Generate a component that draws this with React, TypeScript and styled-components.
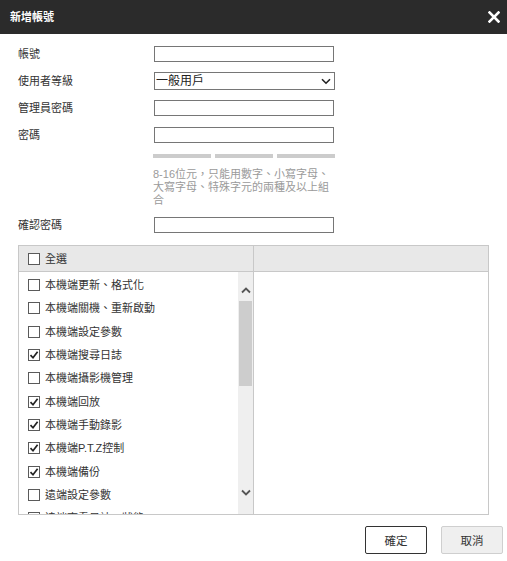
import React from "react";
import styled, { createGlobalStyle } from "styled-components";

const Global = createGlobalStyle`
  html, body { margin: 0; padding: 0; background: #fff; }
  body { font-family: "Liberation Sans", "Noto Sans CJK TC", sans-serif; font-size: 11px; color: #333; }
  * { box-sizing: border-box; }
`;

const Dialog = styled.div`
  width: 507px;
  height: 561px;
  display: flex;
  flex-direction: column;
  background: #fff;
  overflow: hidden;
`;

const Header = styled.div`
  height: 34px;
  flex: none;
  background: #2b2b2b;
  display: flex;
  align-items: center;
  justify-content: space-between;
  padding: 0 6px 0 10px;
`;

const Title = styled.div`
  color: #fff;
  font-weight: bold;
  font-size: 11px;
  line-height: 14px;
`;

const Close = styled.button`
  width: 14px;
  height: 14px;
  padding: 0;
  border: 0;
  background: none;
  display: flex;
  align-items: center;
  justify-content: center;
  cursor: pointer;
`;

const Form = styled.div`
  padding: 6px 0 0 18px;
  display: flex;
  flex-direction: column;
`;

const Row = styled.div<{ $h?: number }>`
  height: ${(p) => p.$h ?? 27}px;
  flex: none;
  display: flex;
  align-items: center;
`;

const Label = styled.div`
  width: 136px;
  flex: none;
  line-height: 14px;
`;

const Input = styled.input`
  width: 180px;
  height: 16px;
  border: 1px solid #767676;
  padding: 0 2px;
  font: inherit;
  outline: none;
`;

const SelectWrap = styled.div`
  position: relative;
  width: 181px;
  height: 18px;
`;

const Select = styled.select`
  appearance: none;
  width: 100%;
  height: 100%;
  border: 1px solid #767676;
  border-radius: 0;
  background: #fff;
  padding: 0 0 0 1px;
  font: inherit;
  font-size: 12px;
  color: #222;
  line-height: 16px;
  outline: none;
`;

const Chevron = styled.svg`
  position: absolute;
  right: 4px;
  top: 6px;
  pointer-events: none;
`;

const Strength = styled.div`
  display: flex;
  gap: 4px;
  margin: 6px 0 0 135px;
`;

const Bar = styled.div`
  width: 58px;
  height: 4px;
  background: #cccccc;
`;

const Hint = styled.div`
  width: 190px;
  margin: 10px 0 0 135px;
  color: #9a9a9a;
  font-size: 11px;
  line-height: 13px;
`;

const Table = styled.div`
  margin: 2px 0 0 18px;
  width: 471px;
  height: 270px;
  flex: none;
  border: 1px solid #c8c8c8;
  display: grid;
  grid-template-columns: 235px 1fr;
  grid-template-rows: 26px 1fr;
  overflow: hidden;
`;

const HeadCell = styled.div<{ $last?: boolean }>`
  background: #e8e8e8;
  border-bottom: 1px solid #c8c8c8;
  border-right: ${(p) => (p.$last ? "none" : "1px solid #c8c8c8")};
  display: flex;
  align-items: center;
  padding-left: 9px;
  gap: 5px;
`;

const ListPane = styled.div`
  border-right: 1px solid #c8c8c8;
  display: flex;
  overflow: hidden;
  min-height: 0;
`;

const List = styled.div`
  flex: 1;
  padding-top: 1.5px;
  display: flex;
  flex-direction: column;
`;

const Item = styled.div`
  height: 23.3px;
  flex: none;
  display: flex;
  align-items: center;
  padding-left: 9px;
  gap: 5px;
  white-space: nowrap;
`;

const ItemText = styled.span`
  line-height: 14px;
  color: #333;
`;

const Box = styled.span`
  width: 12px;
  height: 12px;
  flex: none;
  border: 1px solid #5a5a5a;
  background: #fff;
  display: flex;
  align-items: center;
  justify-content: center;
`;

const Scroll = styled.div`
  width: 15px;
  flex: none;
  background: #efefef;
  display: flex;
  flex-direction: column;
  align-items: center;
  padding-top: 15px;
`;

const Thumb = styled.div`
  width: 13px;
  height: 85px;
  background: #cdcdcd;
  margin-top: 7px;
`;

const DownArrow = styled.div`
  display: flex;
  margin-top: 103px;
`;

const Empty = styled.div``;

const Footer = styled.div`
  display: flex;
  justify-content: flex-end;
  gap: 14px;
  padding: 11px 4px 0 0;
`;

const Button = styled.button<{ $primary?: boolean }>`
  width: 62px;
  height: 28px;
  border-radius: 2px;
  border: 1px solid ${(p) => (p.$primary ? "#333" : "#cfcfcf")};
  background: ${(p) => (p.$primary ? "#fff" : "#efefef")};
  color: #333;
  font: inherit;
  font-size: 11.5px;
  padding: 0;
  cursor: pointer;
`;

const Check = ({ checked }: { checked?: boolean }) => (
  <Box>
    {checked && (
      <svg width="10" height="10" viewBox="0 0 10 10">
        <path d="M1.5 5.2 L4 7.8 L8.6 1.8" fill="none" stroke="#222" strokeWidth="1.7" />
      </svg>
    )}
  </Box>
);

const items: [string, boolean][] = [
  ["本機端更新、格式化", false],
  ["本機端關機、重新啟動", false],
  ["本機端設定參數", false],
  ["本機端搜尋日誌", true],
  ["本機端攝影機管理", false],
  ["本機端回放", true],
  ["本機端手動錄影", true],
  ["本機端P.T.Z控制", true],
  ["本機端備份", true],
  ["遠端設定參數", false],
  ["遠端查看日誌、狀態", false],
];

export default function App() {
  return (
    <>
      <Global />
      <Dialog>
        <Header>
          <Title>新增帳號</Title>
          <Close aria-label="close">
            <svg width="12" height="12" viewBox="0 0 12 12">
              <path d="M1.5 1.5 L10.5 10.5 M10.5 1.5 L1.5 10.5" stroke="#fff" strokeWidth="2.6" strokeLinecap="square" />
            </svg>
          </Close>
        </Header>
        <Form>
          <Row>
            <Label>帳號</Label>
            <Input />
          </Row>
          <Row>
            <Label>使用者等級</Label>
            <SelectWrap>
              <Select defaultValue="user">
                <option value="user">一般用戶</option>
                <option value="op">操作員</option>
              </Select>
              <Chevron width="10" height="7" viewBox="0 0 10 7">
                <path d="M1 1.2 L5 5.2 L9 1.2" fill="none" stroke="#222" strokeWidth="1.6" />
              </Chevron>
            </SelectWrap>
          </Row>
          <Row>
            <Label>管理員密碼</Label>
            <Input type="password" />
          </Row>
          <Row>
            <Label>密碼</Label>
            <Input type="password" />
          </Row>
          <Strength>
            <Bar />
            <Bar />
            <Bar />
          </Strength>
          <Hint>
            8-16位元，只能用數字、小寫字母、
            <br />
            大寫字母、特殊字元的兩種及以上組
            <br />合
          </Hint>
          <Row $h={36}>
            <Label>確認密碼</Label>
            <Input type="password" />
          </Row>
        </Form>
        <Table>
          <HeadCell>
            <Check />
            <ItemText>全選</ItemText>
          </HeadCell>
          <HeadCell $last />
          <ListPane>
            <List>
              {items.map(([t, c]) => (
                <Item key={t}>
                  <Check checked={c} />
                  <ItemText>{t}</ItemText>
                </Item>
              ))}
            </List>
            <Scroll>
              <svg width="10" height="7" viewBox="0 0 10 7">
                <path d="M1 5.5 L5 1.5 L9 5.5" fill="none" stroke="#555" strokeWidth="1.8" />
              </svg>
              <Thumb />
              <DownArrow>
                <svg width="10" height="7" viewBox="0 0 10 7">
                  <path d="M1 1.5 L5 5.5 L9 1.5" fill="none" stroke="#555" strokeWidth="1.8" />
                </svg>
              </DownArrow>
            </Scroll>
          </ListPane>
          <Empty />
        </Table>
        <Footer>
          <Button $primary>確定</Button>
          <Button>取消</Button>
        </Footer>
      </Dialog>
    </>
  );
}
